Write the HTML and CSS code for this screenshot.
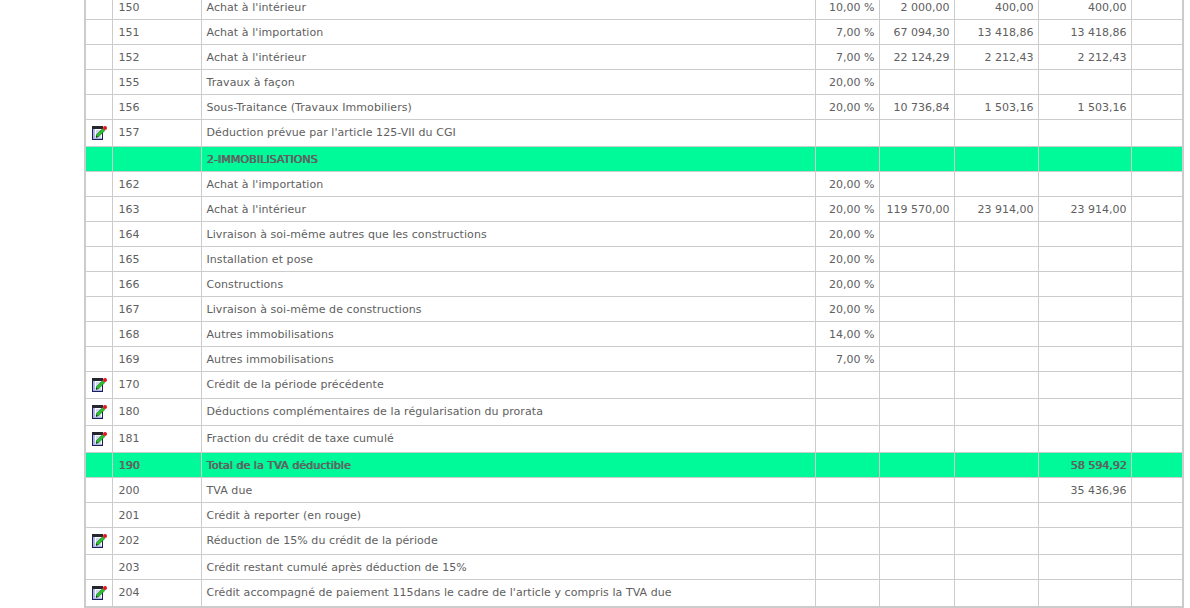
FILE: index.html
```html
<!DOCTYPE html>
<html lang="fr">
<head>
<meta charset="utf-8">
<title>TVA</title>
<link rel="stylesheet" href="styles.css">
</head>
<body>
<svg class="defs" width="0" height="0" aria-hidden="true">
  <symbol id="edit" viewBox="0 0 15 14">
    <rect x="0.5" y="1.5" width="10" height="12" fill="#aab4e6" stroke="#1c1c58"/>
    <rect x="0" y="0" width="11" height="3" fill="#26262e"/>
    <rect x="3" y="3" width="7" height="9" fill="#fff"/>
    <path d="M4 5h5M4 7h2M4 9h2M4 11h5" stroke="#8c9bd8" stroke-width=".8"/>
    <path d="M4 11.5 L4.6 8.4 L10.6 2.6 L12.8 4.6 L6.8 10.6 Z" fill="#2cc02c" stroke="#0c6a18" stroke-width=".6"/>
    <path d="M4 11.5 L4.4 9.6 L5.8 11 Z" fill="#102a10"/>
    <circle cx="13" cy="2" r="2" fill="#e2141e"/>
  </symbol>
</svg>
<div class="page">
<table class="grid">
<colgroup>
  <col class="c-icon"><col class="c-code"><col class="c-label"><col class="c-rate"><col class="c-base"><col class="c-vat"><col class="c-ded"><col class="c-end">
</colgroup>
<tbody>
<tr><td></td><td>150</td><td>Achat à l'intérieur</td><td class="n">10,00 %</td><td class="n">2 000,00</td><td class="n">400,00</td><td class="n">400,00</td><td></td></tr>
<tr><td></td><td>151</td><td>Achat à l'importation</td><td class="n">7,00 %</td><td class="n">67 094,30</td><td class="n">13 418,86</td><td class="n">13 418,86</td><td></td></tr>
<tr><td></td><td>152</td><td>Achat à l'intérieur</td><td class="n">7,00 %</td><td class="n">22 124,29</td><td class="n">2 212,43</td><td class="n">2 212,43</td><td></td></tr>
<tr><td></td><td>155</td><td>Travaux à façon</td><td class="n">20,00 %</td><td></td><td></td><td></td><td></td></tr>
<tr><td></td><td>156</td><td>Sous-Traitance (Travaux Immobiliers)</td><td class="n">20,00 %</td><td class="n">10 736,84</td><td class="n">1 503,16</td><td class="n">1 503,16</td><td></td></tr>
<tr class="tall"><td class="ic"><svg class="icon"><use href="#edit"/></svg></td><td>157</td><td>Déduction prévue par l'article 125-VII du CGI</td><td></td><td></td><td></td><td></td><td></td></tr>
<tr class="hl"><td></td><td></td><td>2-IMMOBILISATIONS</td><td></td><td></td><td></td><td></td><td></td></tr>
<tr><td></td><td>162</td><td>Achat à l'importation</td><td class="n">20,00 %</td><td></td><td></td><td></td><td></td></tr>
<tr><td></td><td>163</td><td>Achat à l'intérieur</td><td class="n">20,00 %</td><td class="n">119 570,00</td><td class="n">23 914,00</td><td class="n">23 914,00</td><td></td></tr>
<tr><td></td><td>164</td><td>Livraison à soi-même autres que les constructions</td><td class="n">20,00 %</td><td></td><td></td><td></td><td></td></tr>
<tr><td></td><td>165</td><td>Installation et pose</td><td class="n">20,00 %</td><td></td><td></td><td></td><td></td></tr>
<tr><td></td><td>166</td><td>Constructions</td><td class="n">20,00 %</td><td></td><td></td><td></td><td></td></tr>
<tr><td></td><td>167</td><td>Livraison à soi-même de constructions</td><td class="n">20,00 %</td><td></td><td></td><td></td><td></td></tr>
<tr><td></td><td>168</td><td>Autres immobilisations</td><td class="n">14,00 %</td><td></td><td></td><td></td><td></td></tr>
<tr><td></td><td>169</td><td>Autres immobilisations</td><td class="n">7,00 %</td><td></td><td></td><td></td><td></td></tr>
<tr class="tall"><td class="ic"><svg class="icon"><use href="#edit"/></svg></td><td>170</td><td>Crédit de la période précédente</td><td></td><td></td><td></td><td></td><td></td></tr>
<tr class="tall"><td class="ic"><svg class="icon"><use href="#edit"/></svg></td><td>180</td><td>Déductions complémentaires de la régularisation du prorata</td><td></td><td></td><td></td><td></td><td></td></tr>
<tr class="tall"><td class="ic"><svg class="icon"><use href="#edit"/></svg></td><td>181</td><td>Fraction du crédit de taxe cumulé</td><td></td><td></td><td></td><td></td><td></td></tr>
<tr class="hl"><td></td><td>190</td><td>Total de la TVA déductible</td><td></td><td></td><td></td><td class="n">58 594,92</td><td></td></tr>
<tr><td></td><td>200</td><td>TVA due</td><td></td><td></td><td></td><td class="n">35 436,96</td><td></td></tr>
<tr><td></td><td>201</td><td>Crédit à reporter (en rouge)</td><td></td><td></td><td></td><td></td><td></td></tr>
<tr class="tall"><td class="ic"><svg class="icon"><use href="#edit"/></svg></td><td>202</td><td>Réduction de 15% du crédit de la période</td><td></td><td></td><td></td><td></td><td></td></tr>
<tr><td></td><td>203</td><td>Crédit restant cumulé après déduction de 15%</td><td></td><td></td><td></td><td></td><td></td></tr>
<tr class="tall"><td class="ic"><svg class="icon"><use href="#edit"/></svg></td><td>204</td><td>Crédit accompagné de paiement 115dans le cadre de l'article y compris la TVA due</td><td></td><td></td><td></td><td></td><td></td></tr>
</tbody>
</table>
</div>
</body>
</html>
```
FILE: styles.css
```css
html, body {
  margin: 0;
  padding: 0;
  background: #fff;
  height: 608px;
  overflow: hidden;
}
.defs {
  position: absolute;
}
.page {
  margin-left: 84px;
  width: 1100px;
  margin-top: -7px;
}
.grid {
  border-collapse: collapse;
  table-layout: fixed;
  width: 1100px;
  border: 2px solid #ccc;
  font-family: "DejaVu Sans", Verdana, sans-serif;
  font-size: 11px;
  color: #606060;
}
.c-icon { width: 27px; }
.c-code { width: 89px; }
.c-label { width: 614px; }
.c-rate { width: 64px; }
.c-base { width: 75px; }
.c-vat { width: 84px; }
.c-ded { width: 93px; }
.c-end { width: 52px; }
.grid td {
  height: 23px;
  padding: 1px 5px 0;
  border: 1px solid #ccc;
  box-sizing: content-box;
  white-space: nowrap;
  vertical-align: middle;
  line-height: 14px;
}
.grid td:nth-child(2) {
  padding-left: 6px;
}
.grid td:nth-child(3) {
  letter-spacing: 0.07px;
}
.grid td.n {
  text-align: right;
  padding-right: 4px;
}
.grid .tall td {
  height: 26px;
  padding-top: 0;
}
.grid .tall td.ic {
  padding: 0 0 0 6px;
}
.icon {
  display: block;
  width: 15px;
  height: 14px;
}
.hl td {
  background: #00fa9a;
  font-weight: normal;
  text-shadow: 0.8px 0 0 #606060;
}
```
